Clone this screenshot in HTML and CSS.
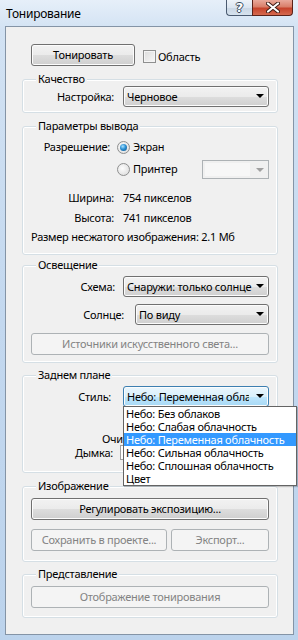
FILE: index.html
```html
<!DOCTYPE html>
<html lang="ru">
<head>
    <meta charset="UTF-8">
    <title>Тонирование</title>
    <link rel="stylesheet" href="styles.css">
</head>
<body>
    <div class="window">
        <div class="titlebar">
            <span class="title">Тонирование</span>
            <div class="caption-buttons">
                <span class="cap-btn cap-help">?</span>
                <span class="cap-btn cap-close">
                    <svg width="14" height="11" viewBox="0 0 14 11">
                        <path d="M2 1.5 L12 9.5 M12 1.5 L2 9.5" stroke="#3b1a14" stroke-width="4" stroke-linecap="round"/>
                        <path d="M2 1.5 L12 9.5 M12 1.5 L2 9.5" stroke="#fff" stroke-width="2.2" stroke-linecap="round"/>
                    </svg>
                </span>
            </div>
        </div>

        <div class="client">
            <div class="top-row">
                <button class="btn btn-render">Тонировать</button>
                <label class="check"><span class="checkbox"></span>Область</label>
            </div>

            <!-- Качество -->
            <div class="group g-quality">
                <div class="group-title">Качество</div>
                <div class="field">
                    <span class="field-label">Настройка:</span>
                    <div class="combo"><span class="combo-text">Черновое</span><span class="arrow"></span></div>
                </div>
            </div>

            <!-- Параметры вывода -->
            <div class="group g-output">
                <div class="group-title">Параметры вывода</div>
                <div class="field f-res">
                    <span class="field-label">Разрешение:</span>
                    <label class="radio-item"><span class="radio checked"></span>Экран</label>
                </div>
                <div class="field f-printer">
                    <label class="radio-item"><span class="radio"></span>Принтер</label>
                    <div class="combo-edit disabled"><span class="edit-box"></span><span class="arrow"></span></div>
                </div>
                <div class="field f-width">
                    <span class="field-label">Ширина:</span>
                    <span>754 пикселов</span>
                </div>
                <div class="field f-height">
                    <span class="field-label">Высота:</span>
                    <span>741 пикселов</span>
                </div>
                <div class="field f-size">
                    <span>Размер несжатого изображения: 2.1 Мб</span>
                </div>
            </div>

            <!-- Освещение -->
            <div class="group g-light">
                <div class="group-title">Освещение</div>
                <div class="field f-scheme">
                    <span class="field-label">Схема:</span>
                    <div class="combo"><span class="combo-text">Снаружи: только солнце</span><span class="arrow"></span></div>
                </div>
                <div class="field f-sun">
                    <span class="field-label">Солнце:</span>
                    <div class="combo"><span class="combo-text">По виду</span><span class="arrow"></span></div>
                </div>
                <button class="btn btn-wide" disabled>Источники искусственного света...</button>
            </div>

            <!-- Заднем плане -->
            <div class="group g-back">
                <div class="group-title">Заднем плане</div>
                <div class="field f-style">
                    <span class="field-label">Стиль:</span>
                    <div class="combo open"><span class="combo-text">Небо: Переменная облачность</span><span class="arrow"></span>
                        <ul class="dropdown-list">
                            <li>Небо: Без облаков</li>
                            <li>Небо: Слабая облачность</li>
                            <li class="selected">Небо: Переменная облачность</li>
                            <li>Небо: Сильная облачность</li>
                            <li>Небо: Сплошная облачность</li>
                            <li>Цвет</li>
                        </ul>
                    </div>
                </div>
                <div class="field f-clear">
                    <span class="field-label">Очи</span>
                </div>
                <div class="field f-haze">
                    <span class="field-label">Дымка:</span>
                    <span class="slider-box"></span>
                </div>
            </div>

            <!-- Изображение -->
            <div class="group g-image">
                <div class="group-title">Изображение</div>
                <button class="btn btn-wide">Регулировать экспозицию...</button>
                <div class="btn-pair">
                    <button class="btn btn-save" disabled>Сохранить в проекте...</button>
                    <button class="btn btn-export" disabled>Экспорт...</button>
                </div>
            </div>

            <!-- Представление -->
            <div class="group g-view">
                <div class="group-title">Представление</div>
                <button class="btn btn-wide" disabled>Отображение тонирования</button>
            </div>
        </div>
    </div>
</body>
</html>
```

FILE: styles.css
```css
body {
    margin: 0;
    font-family: "Noto Sans", "Open Sans", sans-serif;
    font-size: 11px;
    letter-spacing: -0.25px;
    line-height: 14px;
    color: #000;
    overflow: hidden;
}

.window {
    width: 298px;
    height: 640px;
    box-sizing: border-box;
    padding: 0 4px 5px 5px;
    display: flex;
    flex-direction: column;
    background: linear-gradient(180deg, #e6eff9 0, #d2e2f3 30px, #c3d8ef 50%, #bcd3ec 100%);
}

/* title bar */
.titlebar {
    height: 26px;
    display: flex;
    justify-content: space-between;
    align-items: flex-start;
}

.title {
    padding: 6px 0 0 1px;
    line-height: 15px;
    font-size: 12px;
    color: #000;
}

.caption-buttons {
    display: flex;
    margin-right: 1px;
}

.cap-btn {
    height: 16px;
    box-sizing: border-box;
    border: 1px solid #4a5a70;
    border-top: none;
    display: flex;
    align-items: center;
    justify-content: center;
}

.cap-help {
    width: 26px;
    border-right: none;
    border-radius: 0 0 0 4px;
    background: linear-gradient(180deg, #eef3f9 0, #dbe5f0 50%, #c9d6e4 51%, #d6e2ee 100%);
    color: #fff;
    font: bold 13px "DejaVu Sans", sans-serif;
    text-shadow: 1px 0 0 #36475b, -1px 0 0 #36475b, 0 1px 0 #36475b, 0 -1px 0 #36475b;
}

.cap-close {
    width: 41px;
    border-color: #5a2219;
    border-radius: 0 0 4px 0;
    background: linear-gradient(180deg, #e9a99b 0, #d97f6a 45%, #c6432b 55%, #d5694f 100%);
}

/* client area */
.client {
    flex: 1;
    background: #f0f0f0;
    border: 1px solid #8494a6;
    display: flex;
    flex-direction: column;
}

.top-row {
    display: flex;
    align-items: center;
    margin: 17px 0 0 25px;
}

.check {
    display: flex;
    align-items: center;
    margin: 3px 0 0 8px;
}

.checkbox {
    width: 13px;
    height: 13px;
    box-sizing: border-box;
    border: 1px solid #8e8f8f;
    background: linear-gradient(135deg, #dcdcdc 0, #f7f7f7 100%);
    box-shadow: inset 0 0 0 1px #f4f4f4;
    margin-right: 2px;
}

/* buttons */
.btn {
    height: 22px;
    box-sizing: border-box;
    border: 1px solid #707070;
    border-radius: 3px;
    background: linear-gradient(180deg, #f2f2f2 0, #ebebeb 50%, #dddddd 51%, #cfcfcf 100%);
    box-shadow: inset 0 0 0 1px #fcfcfc;
    font: inherit;
    letter-spacing: inherit;
    color: #000;
    padding: 0;
}

.btn:disabled {
    border-color: #adb2b5;
    background: #f4f4f4;
    box-shadow: none;
    color: #838383;
}

.btn-render {
    width: 104px;
}

.btn-wide {
    width: 100%;
    display: block;
}

.btn-pair {
    display: flex;
    gap: 4px;
    margin-top: 9px;
}

.btn-save {
    width: 136px;
}

.btn-export {
    flex: 1;
}

/* group boxes */
.group {
    margin: 13px 15px 0 16px;
    border: 1px solid #d5dfe5;
    border-radius: 3px;
    box-shadow: inset 0 0 0 1px #fff;
    padding: 0 8px 5px;
}

.group-title {
    display: table;
    height: 14px;
    margin: -8px 0 0 5px;
    padding: 0 2px;
    background: #f0f0f0;
}

.field {
    display: flex;
    align-items: center;
    height: 21px;
}

.field-label {
    width: 83px;
    flex: none;
    text-align: right;
    margin-right: 9px;
}

/* combo boxes */
.combo {
    position: relative;
    flex: 1;
    min-width: 0;
    height: 21px;
    box-sizing: border-box;
    border: 1px solid #707070;
    border-radius: 3px;
    background: linear-gradient(180deg, #f2f2f2 0, #ebebeb 50%, #dddddd 51%, #cfcfcf 100%);
    box-shadow: inset 0 0 0 1px #fcfcfc;
    display: flex;
    align-items: center;
    padding: 0 11px 0 3px;
}

.combo-text {
    flex: 1;
    overflow: hidden;
    white-space: nowrap;
}

.combo .arrow {
    position: absolute;
    right: 4px;
    top: 7px;
    width: 0;
    height: 0;
    border-left: 4px solid transparent;
    border-right: 4px solid transparent;
    border-top: 4px solid #000;
}

.combo.open {
    border-color: #3c7fb1;
    padding-right: 19px;
    background: linear-gradient(180deg, #eaf6fd 0, #d9f0fc 50%, #bee6fd 51%, #a7d9f5 100%);
}

/* Параметры вывода */
.g-output {
    padding-bottom: 7px;
}

.f-res {
    margin-top: 4px;
    height: 20px;
}

.f-res .field-label {
    width: 79px;
    margin-right: 7px;
}

.radio-item {
    display: flex;
    align-items: center;
}

.radio {
    width: 13px;
    height: 13px;
    box-sizing: border-box;
    border-radius: 50%;
    border: 1px solid #8e8f8f;
    background: radial-gradient(circle at 40% 40%, #fdfdfd 0, #e3e3e3 70%, #d0d0d0 100%);
    margin-right: 3px;
    position: relative;
}

.radio.checked::after {
    content: "";
    position: absolute;
    left: 2px;
    top: 2px;
    width: 7px;
    height: 7px;
    border-radius: 50%;
    background: radial-gradient(circle at 40% 35%, #a8e2ff 0, #2a8fd3 45%, #0d4f85 100%);
}

.f-printer {
    margin-top: 2px;
    height: 20px;
    padding-left: 86px;
}

.combo-edit {
    margin-left: auto;
    width: 67px;
    height: 19px;
    box-sizing: border-box;
    border: 1px solid #adb2b5;
    background: #f0f0f0;
    display: flex;
    align-items: center;
    position: relative;
}

.combo-edit .edit-box {
    width: 45px;
    height: 13px;
    margin-left: 2px;
    background: #f7f7f7;
}

.combo-edit .arrow {
    position: absolute;
    right: 4px;
    top: 7px;
    border-left: 4px solid transparent;
    border-right: 4px solid transparent;
    border-top: 4px solid #a0a0a0;
}

.f-width {
    margin-top: 9px;
    height: 20px;
}

.f-height {
    height: 20px;
}

.f-size {
    margin-top: -1px;
    height: 20px;
}

/* Освещение */
.g-light {
    margin-top: 10px;
    padding-bottom: 7px;
}

.f-scheme {
    margin-top: 4px;
}

.f-scheme .field-label {
    width: 84px;
    margin-right: 8px;
}

.f-sun {
    margin-top: 7px;
}

.f-sun .field-label {
    width: 93px;
    margin-right: 11px;
}

.g-light .btn-wide {
    margin-top: 8px;
}

/* Заднем плане */
.g-back {
    margin-top: 12px;
    padding-bottom: 11px;
}

.f-style {
    margin-top: 4px;
}

.f-style .field-label {
    width: 80px;
    margin-right: 12px;
}

.f-clear {
    margin-top: 26px;
    height: 11px;
}

.f-clear .field-label {
    width: auto;
    margin-left: 71px;
    text-align: left;
}

.f-haze {
    height: 17px;
}

.f-haze .field-label {
    width: 82px;
    margin-right: 7px;
}

.slider-box {
    width: 60px;
    height: 13px;
    border: 1px solid #a0a0a0;
    background: #fff;
}

.dropdown-list {
    position: absolute;
    left: -1px;
    top: 19px;
    width: 172px;
    margin: 0;
    padding: 0;
    list-style: none;
    background: #fff;
    border: 1px solid #646464;
    box-shadow: 1px 1px 1px rgba(0, 0, 0, 0.2);
    z-index: 5;
}

.dropdown-list li {
    height: 13px;
    line-height: 13px;
    padding-left: 2px;
    white-space: nowrap;
}

.dropdown-list li.selected {
    background: #3399ff;
    color: #fff;
}

/* Изображение */
.g-image {
    margin-top: 13px;
    padding-bottom: 10px;
}

.g-image .btn-wide {
    margin-top: 5px;
}

/* Представление */
.g-view {
    margin-top: 12px;
    padding-bottom: 9px;
}

.g-view .btn-wide {
    margin-top: 5px;
}
```
